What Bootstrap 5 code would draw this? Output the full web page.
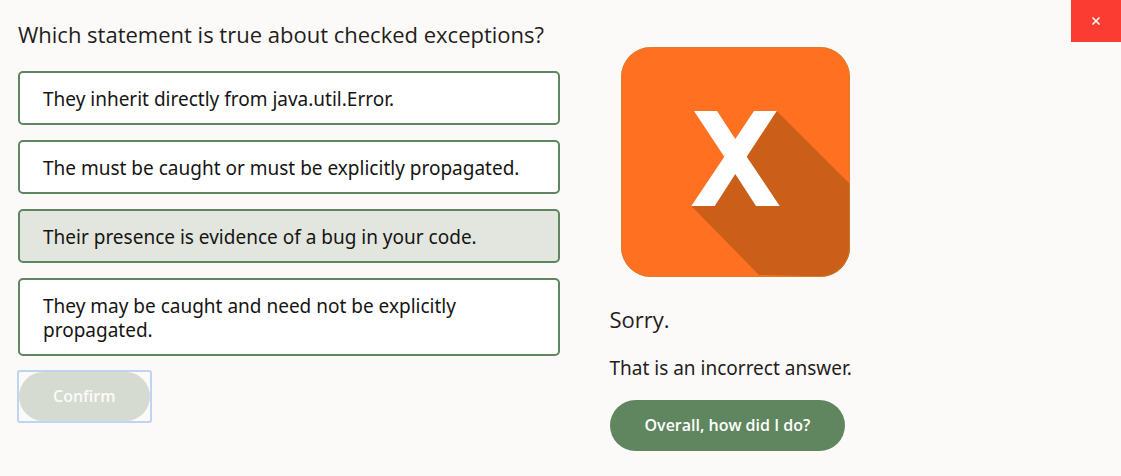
<!DOCTYPE html>
<html lang="en">
<head>
<meta charset="utf-8">
<meta name="viewport" content="width=device-width, initial-scale=1">
<title>Checked exceptions quiz</title>
<link href="https://cdn.jsdelivr.net/npm/bootstrap@5.3.0/dist/css/bootstrap.min.css" rel="stylesheet">
<style>
  body { background: #fcfaf9; color: #1f1e1c; font-family: "Noto Sans", sans-serif; font-size: 19px; line-height: 24px; }
  .question-side { padding: 19px 1px 20px 18px; }
  .result-side { padding: 47px 50px 24px 49px; }
  .quiz-title { font-family: "Open Sans", sans-serif; font-size: 22px; line-height: 30px; font-weight: 400; margin-bottom: 22px; }
  .answers { gap: 15px; margin-bottom: 14px; }
  .answer { border: 2px solid #5f8660; border-radius: 5px; background: #fff; color: #161513; padding: 14px 23px 12px; font-size: 19px; line-height: 24px; }
  .answer.picked { background: #e2e6df; }
  .pill { background: #5f865f; color: #fff; border: 0; border-radius: 26px; font-family: "Open Sans", sans-serif; font-size: 16px; font-weight: 600; line-height: 25px; padding: 13px 35px; }
  .pill:disabled { background: #d6dbd1; color: #fcfaf9; }
  .ring { border: 2px solid #bfd4f0; border-radius: 3px; margin-left: -1px; }
  .ring .pill { padding: 12px 34px; }
  .verdict-icon { width: 229px; margin-left: 11px; margin-bottom: 27px; }
  .verdict-text { margin-bottom: 20px; }
  .close-quiz { background: #fa3c32; color: #fff; width: 50px; height: 42px; }
</style>
</head>
<body>
<main class="container-fluid p-0 position-relative">
  <div class="row g-0">
    <section class="col-6 question-side">
      <h1 class="quiz-title">Which statement is true about checked exceptions?</h1>
      <div class="answers d-flex flex-column">
        <button type="button" class="answer text-start">They inherit directly from java.util.Error.</button>
        <button type="button" class="answer text-start">The must be caught or must be explicitly propagated.</button>
        <button type="button" class="answer picked text-start" aria-pressed="true">Their presence is evidence of a bug in your code.</button>
        <button type="button" class="answer text-start">They may be caught and need not be explicitly propagated.</button>
      </div>
      <div class="ring d-inline-flex align-top"><button type="button" class="pill" disabled>Confirm</button></div>
    </section>
    <section class="col-6 result-side">
      <svg class="verdict-icon d-block" viewBox="0 0 229 230" role="img" aria-label="Incorrect">
        <defs><clipPath id="tile"><rect width="229" height="230" rx="30"/></clipPath></defs>
        <g clip-path="url(#tile)">
          <path fill="#ff7020" d="M0 0h229v230H0z"/>
          <path fill="#cb5f19" d="M155.7 64 229 137v93l-91-2-67.700-69z"/>
        </g>
        <rect x=".5" y=".5" width="228" height="229" rx="29.500" fill="none" stroke="#c88434" stroke-opacity=".7"/>
        <path fill="#fff" d="M73 64h23l18.300 28L133 64h22.700l-30 45.700 33 49.300H135l-20.700-32-20.600 32H70.300l33-49.300z"/>
      </svg>
      <h2 class="quiz-title">Sorry.</h2>
      <p class="verdict-text">That is an incorrect answer.</p>
      <button type="button" class="pill align-top">Overall, how did I do?</button>
    </section>
  </div>
  <button type="button" class="close-quiz border-0 p-0 position-absolute top-0 end-0 d-flex align-items-center justify-content-center" aria-label="Close">
    <svg width="8" height="8" viewBox="0 0 8 8" stroke="#fff" stroke-width="1.500" aria-hidden="true"><path d="M.5.5l7 7M7.500.5l-7 7"/></svg>
  </button>
</main>
<script src="https://cdn.jsdelivr.net/npm/bootstrap@5.3.0/dist/js/bootstrap.bundle.min.js"></script>
</body>
</html>
